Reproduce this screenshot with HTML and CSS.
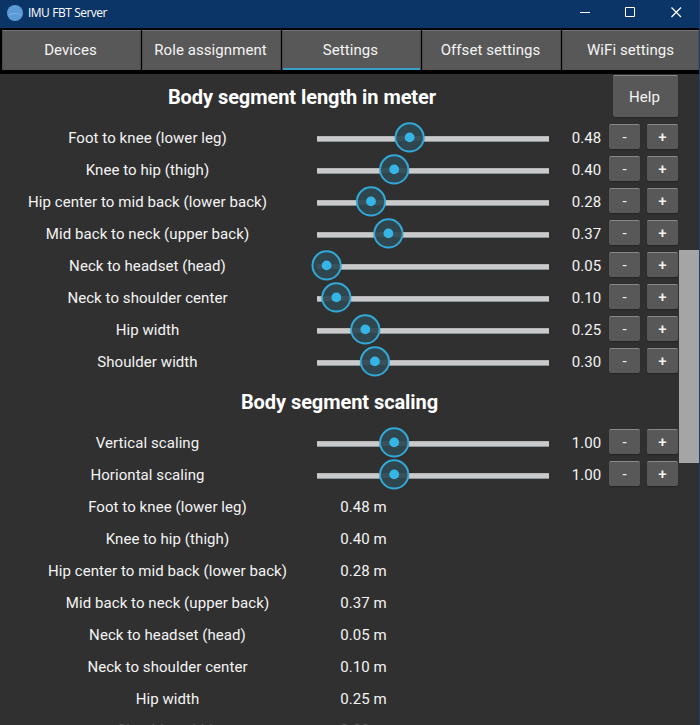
FILE: index.html
```html
<!DOCTYPE html>
<html lang="en">
<head>
<meta charset="utf-8">
<title>IMU FBT Server</title>
<link rel="stylesheet" href="styles.css">
</head>
<body>
<div class="window">
<header class="titlebar">
<svg class="logo" width="16" height="16" viewBox="0 0 16 16"><circle cx="8" cy="8" r="8" fill="#5b9bd5"/><path d="M1.500 10.500C3.500 9 5.500 8.500 8 8.500S12.500 9 14.500 10.500" fill="none" stroke="#8fbde6" stroke-width=".7"/><circle cx="7.500" cy="2" r=".6" fill="#80b2df"/></svg>
<span class="app-name">IMU FBT Server</span>
<svg class="controls" width="120" height="28" viewBox="0 0 120 28" fill="none" stroke="#fff"><path d="M0 12.500H10M45.500 7.500h9v9h-9z"/><path stroke-width="1.300" d="M91.500 7.500l9.500 9.500M101 7.500l-9.500 9.500"/></svg>
</header>
<nav class="tabs">
<button class="tab">Devices</button><button class="tab">Role assignment</button><button class="tab active">Settings</button><button class="tab">Offset settings</button><button class="tab">WiFi settings</button>
</nav>
<main class="content">
<div class="top"><h1>Body segment length in meter</h1><button class="btn help">Help</button></div>
<div id="lengths"></div>
<h2>Body segment scaling</h2>
<div id="scaling"></div>
<div id="results"></div>
<div class="scrollbar"></div>
</main>
</div>
<script src="app.js"></script>
</body>
</html>
```
FILE: styles.css
```css
* { box-sizing: border-box; }
body { margin: 0; background: #303030; overflow: hidden; }
.window { width: 700px; height: 725px; overflow: hidden; display: flex; flex-direction: column; border-right: 1px solid #1d4270; font: 15px/20px Roboto, sans-serif; letter-spacing: .07px; color: #f4f4f4; }
.titlebar { height: 28px; flex: none; background: #0b3467; display: flex; align-items: center; padding: 0 0 3px 7px; }
.logo { flex: none; }
.app-name { margin-left: 5px; font: 12px/16px "Open Sans", sans-serif; letter-spacing: -.57px; word-spacing: .6px; color: #fff; white-space: nowrap; }
.controls { margin: 3px -1px 0 auto; flex: none; }
.tabs { height: 46px; flex: none; background: #000; padding: 2px 0 4px 2px; display: grid; grid-template-columns: 139px 139px 139px 139px 137px; column-gap: 1px; }
button { font: inherit; letter-spacing: inherit; color: inherit; padding: 0; border: 0; }
.tab { background: #585858; border-top: 1px solid #747474; border-left: 1px solid #4a4a4a; border-right: 1px solid #4a4a4a; padding: 0 2px 2px 0; }
.tab:last-child { padding-right: 0; }
.tab.active { box-shadow: inset 0 -2px #3c9fc7; }
.content { position: relative; flex: 1; min-height: 0; overflow: hidden; background: #303030; }
.top { height: 48px; display: flex; align-items: flex-start; }
h1, h2 { margin: 0; font-size: 20px; line-height: 24px; font-weight: 700; letter-spacing: -.07px; color: #fff; text-align: center; }
h1 { width: 604px; padding-top: 11px; }
h2 { height: 49px; width: 679px; padding-top: 12px; }
.btn { background: #585858; border-top: 1px solid #898989; border-radius: 2px; box-shadow: 0 1px 1px #242424; }
.help { width: 65px; height: 42px; margin: 1px 0 0 9px; padding-right: 2px; }
.row { height: 32px; display: grid; grid-template-columns: 295px 22px 232px 19px 37px 4px 31px 7px 31px; align-items: center; text-align: center; }
.label { grid-column: 1; }
.slider { grid-column: 3; height: 32px; display: block; overflow: visible; }
.amount { grid-column: 5; }
.row .btn { height: 25px; margin-bottom: 3px; }
.minus { grid-column: 7; }
.plus { grid-column: 9; font-weight: 500; }
.result { height: 32px; display: grid; grid-template-columns: 335px 57px; align-items: center; text-align: center; }
.result:last-child { margin-top: -1px; color: #595959; }
.scrollbar { position: absolute; right: 0; top: 176px; width: 20px; height: 213px; background: #a5a5a5; }
```
FILE: app.js
```js
const segments = [
  ["Foot to knee (lower leg)", "0.48", 92.6],
  ["Knee to hip (thigh)", "0.40", 77.2],
  ["Hip center to mid back (lower back)", "0.28", 54],
  ["Mid back to neck (upper back)", "0.37", 71.4],
  ["Neck to headset (head)", "0.05", 9.6],
  ["Neck to shoulder center", "0.10", 19.3],
  ["Hip width", "0.25", 48.3],
  ["Shoulder width", "0.30", 57.9]
];
const scales = [
  ["Vertical scaling", "1.00", 77.2],
  ["Horiontal scaling", "1.00", 77.2]
];
const sliderRow = ([label, value, x]) => `<div class="row"><span class="label">${label}</span>
<svg class="slider" width="232" height="32" viewBox="0 0 232 32"><path fill="#cacaca" d="M0 14h232v6H0z"/><path fill="#b5b5b5" d="M0 14h232v1H0z"/><path fill="#89949b" d="M0 19h232v1H0z"/><circle cx="${x}" cy="15.400" r="14.100" fill="#30464f" stroke="#32a8d6" stroke-width="2"/><path fill="#3b515a" d="M${Math.max(0, x - 13)} 14H${x + 13}v5H${Math.max(0, x - 13)}z"/><circle cx="${x}" cy="15.400" r="4.900" fill="#35b5e5"/></svg>
<span class="amount">${value}</span><button class="btn minus">-</button><button class="btn plus">+</button></div>`;
document.getElementById("lengths").innerHTML = segments.map(sliderRow).join("");
document.getElementById("scaling").innerHTML = scales.map(sliderRow).join("");
document.getElementById("results").innerHTML = segments.map(([label, value]) =>
  `<div class="result"><span>${label}</span><span>${value} m</span></div>`).join("");
```
